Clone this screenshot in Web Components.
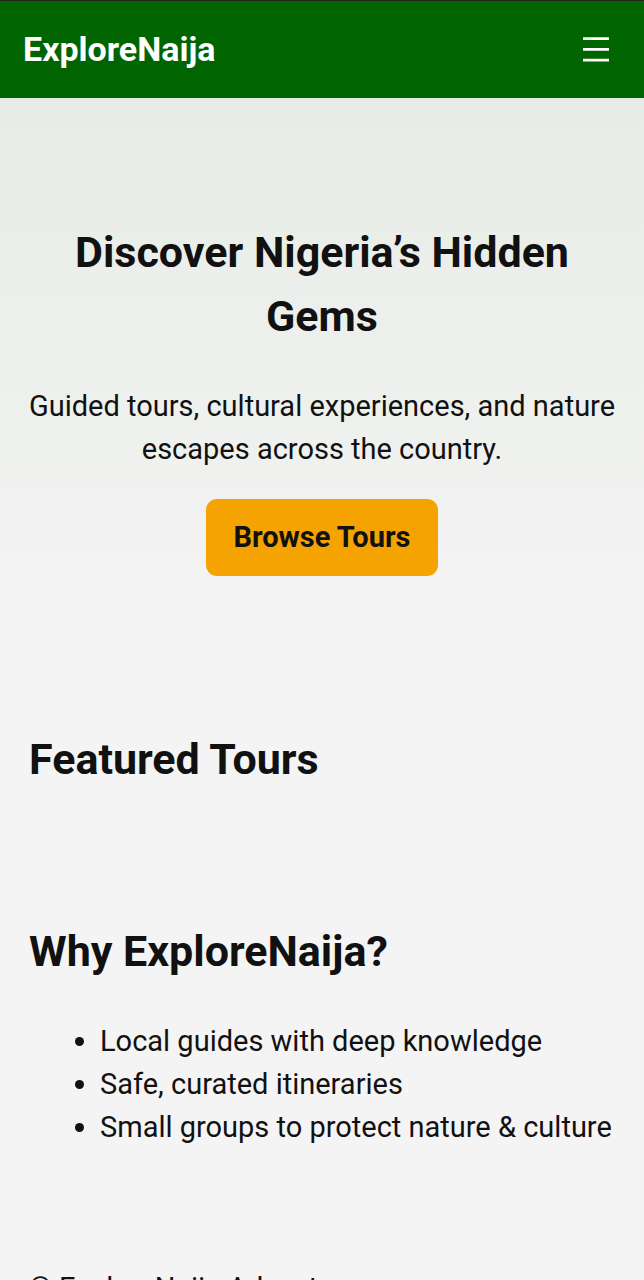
<!DOCTYPE html>
<html lang="en">
<head>
<meta charset="utf-8">
<meta name="viewport" content="width=device-width, initial-scale=1">
<title>ExploreNaija</title>
<style>
  body { margin: 0; background: #f4f4f4; color: #111; font: 29px/43px Roboto, "Noto Sans", sans-serif; }
</style>
</head>
<body>
<site-header>ExploreNaija</site-header>
<main>
  <tour-hero>
    <span slot="title">Discover Nigeria’s Hidden Gems</span>
    Guided tours, cultural experiences, and nature escapes across the country.
    <span slot="action">Browse Tours</span>
  </tour-hero>
  <page-section heading="Featured Tours" id="tours"></page-section>
  <page-section heading="Why ExploreNaija?"><reason-list></reason-list></page-section>
</main>
<site-footer>© ExploreNaija Adventures</site-footer>
<script>
class BaseElement extends HTMLElement {
  connectedCallback() {
    if (!this.shadowRoot) this.attachShadow({ mode: "open" }).innerHTML = this.render();
  }
}
customElements.define("site-header", class extends BaseElement {
  render() {
    return `<style>
      :host { display: block; }
      header { display: flex; align-items: center; justify-content: space-between; padding: 22px 24px 22px 23px; background: #006400; color: #fff; border-top: 1px solid #222; }
      a { color: inherit; text-decoration: none; font-size: 34px; font-weight: 700; line-height: 53px; }
      button { display: flex; margin: 0; padding: 8px; border: 0; background: none; color: inherit; cursor: pointer; }
      svg { display: block; }
    </style>
    <header><a href="#"><slot></slot></a>
      <button type="button" aria-label="Menu"><svg width="32" height="32" viewBox="0 0 32 32" fill="currentColor"><path d="M3 4.2h26v2.8H3zM3 15h26v2.8H3zM3 25.8h26v2.8H3z" transform="translate(0 -1)"/></svg></button>
    </header>`;
  }
});
customElements.define("tour-hero", class extends BaseElement {
  render() {
    return `<style>
      :host { display: block; }
      section { padding: 122px 24px 72px; text-align: center; background: linear-gradient(#e7ece6, #f4f4f4); }
      h1 { margin: 0 0 37px; font-size: 43px; line-height: 64px; }
      p { margin: 0 0 28px; }
      a { display: inline-block; padding: 17px 27px; border-radius: 11px; background: #f4a300; color: #111; font-weight: 700; text-decoration: none; vertical-align: top; }
    </style>
    <section><h1><slot name="title"></slot></h1><p><slot></slot></p><a href="#tours"><slot name="action"></slot></a></section>`;
  }
});
customElements.define("page-section", class extends BaseElement {
  render() {
    return `<style>
      :host { display: block; padding: 43px 29px; }
      h2 { margin: 36px 0 37px; font-size: 43px; line-height: 64px; }
      :host(#tours) { padding-bottom: 12px; }
    </style>
    <section><h2></h2><slot></slot></section>`;
  }
  connectedCallback() {
    super.connectedCallback();
    this.shadowRoot.querySelector("h2").textContent = this.getAttribute("heading");
  }
});
customElements.define("reason-list", class extends BaseElement {
  render() {
    return `<style>
      :host { display: block; }
      ul { margin: 0 0 32px; padding-left: 71px; }
    </style>
    <ul><li>Local guides with deep knowledge</li><li>Safe, curated itineraries</li><li>Small groups to protect nature &amp; culture</li></ul>`;
  }
});
customElements.define("site-footer", class extends BaseElement {
  render() {
    return `<style>
      :host { display: block; }
      footer { padding: 43px 29px; }
    </style>
    <footer><slot></slot></footer>`;
  }
});
</script>
</body>
</html>
